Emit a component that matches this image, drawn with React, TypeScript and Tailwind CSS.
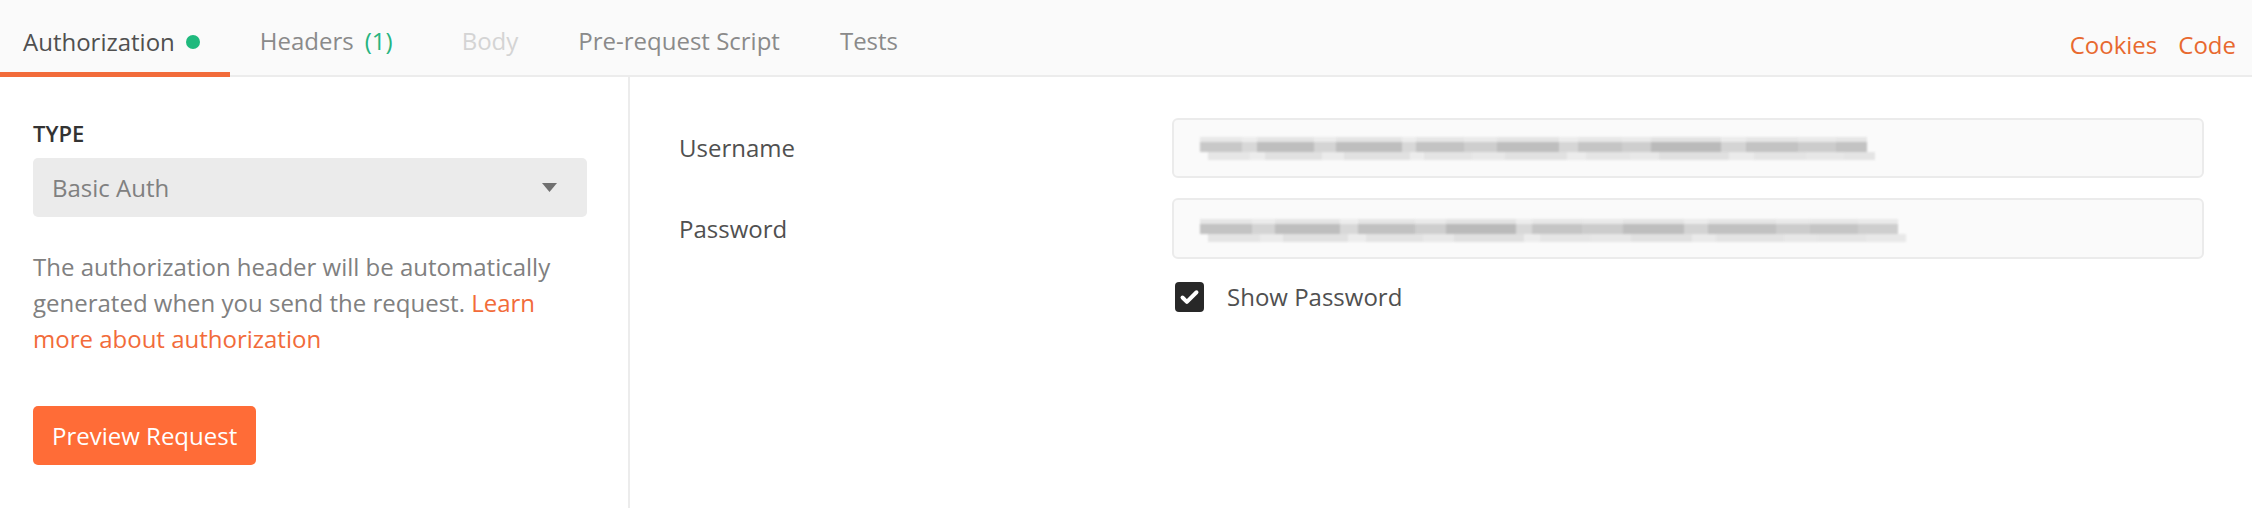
import { Check } from 'lucide-react'

const userBlur = [
  [38, 0.45], [14, 0.3], [52, 0.55], [20, 0.35], [60, 0.55], [12, 0.3], [44, 0.5], [30, 0.4],
  [56, 0.55], [18, 0.32], [40, 0.48], [26, 0.4], [64, 0.58], [22, 0.35], [48, 0.5], [34, 0.42], [28, 0.5],
]
const passBlur = [
  [46, 0.5], [20, 0.35], [58, 0.55], [16, 0.3], [50, 0.52], [28, 0.4], [62, 0.58], [14, 0.3],
  [44, 0.48], [36, 0.42], [54, 0.55], [22, 0.36], [60, 0.52], [30, 0.42], [42, 0.48], [36, 0.4],
]

function Blurred({ parts, scale }: { parts: number[][]; scale: number }) {
  return (
    <div className="flex flex-col blur-[1px]">
      <div className="flex h-[5px]">
        {parts.map(([w, o], i) => (
          <div key={i} style={{ width: w * scale, background: `rgba(170,170,170,${o * 0.5})` }} />
        ))}
      </div>
      <div className="flex h-[10px]">
        {parts.map(([w, o], i) => (
          <div key={i} style={{ width: w * scale, background: `rgba(140,140,140,${o})` }} />
        ))}
      </div>
      <div className="flex h-[8px] pl-[8px]">
        {parts.map(([w, o], i) => (
          <div key={i} style={{ width: w * scale, background: `rgba(170,170,170,${o * 0.55})` }} />
        ))}
      </div>
    </div>
  )
}

export default function App() {
  return (
    <div className="h-[508px] w-full flex flex-col bg-white font-['Open_Sans',sans-serif] text-[24px] text-[#505050]">
      {/* Tabs */}
      <div className="h-[77px] shrink-0 flex items-stretch bg-[#fafafa] border-b-2 border-[#ececec]">
        <div className="flex items-stretch">
          <div className="flex items-center pl-[23px] pr-[30px] pt-[12px] border-b-[5px] border-[#f26b3a] -mb-[2px]">
            <span className="leading-[32px] text-[#505050]">Authorization</span>
            <span className="ml-[11px] w-[14px] h-[14px] rounded-full bg-[#1fb97d]" />
          </div>
          <div className="flex items-center pl-[30px] pr-[39px] pt-[12px] border-b-[5px] border-transparent">
            <span className="leading-[32px] text-[#8a8a8a]">Headers</span>
            <span className="ml-[11px] leading-[32px] text-[#26b47f]">(1)</span>
          </div>
          <div className="flex items-center px-[30px] pt-[12px] border-b-[5px] border-transparent">
            <span className="leading-[32px] text-[#d4d4d4]">Body</span>
          </div>
          <div className="flex items-center px-[30px] pt-[12px] border-b-[5px] border-transparent">
            <span className="leading-[32px] text-[#8a8a8a]">Pre-request Script</span>
          </div>
          <div className="flex items-center px-[30px] pt-[12px] border-b-[5px] border-transparent">
            <span className="leading-[32px] text-[#8a8a8a]">Tests</span>
          </div>
        </div>
        <div className="ml-auto flex items-center gap-[21px] pr-[16px] pt-[14px] text-[#e8692f]">
          <span className="leading-[32px]">Cookies</span>
          <span className="leading-[32px]">Code</span>
        </div>
      </div>

      {/* Body */}
      <div className="flex-1 flex">
        <div className="w-[630px] shrink-0 border-r-2 border-[#ececec] px-[33px] pt-[41px]">
          <div className="text-[22px] leading-[30px] font-semibold text-[#333333]">TYPE</div>
          <div className="mt-[10px] h-[59px] w-[554px] rounded-[5px] bg-[#ebebeb] flex items-center justify-between pl-[19px] pr-[30px]">
            <span className="text-[#808080]">Basic Auth</span>
            <svg width="15" height="9" viewBox="0 0 15 9">
              <path d="M0 0 L15 0 L7.5 9 Z" fill="#707070" />
            </svg>
          </div>
          <p className="mt-[32px] w-[554px] leading-[36px] text-[#808080]">
            The authorization header will be automatically generated when you send the request.{' '}
            <span className="text-[#f26b3a]">Learn more about authorization</span>
          </p>
          <button className="mt-[49px] h-[59px] px-[19px] rounded-[5px] bg-[#ff6c37] text-white leading-[32px]">
            Preview Request
          </button>
        </div>

        <div className="flex-1 pt-[41px] pl-[49px] pr-[48px]">
          <div className="grid grid-cols-[493px_1fr] gap-y-[20px] items-center">
            <span className="text-[#505050]">Username</span>
            <div className="h-[60px] rounded-[6px] border-2 border-[#ebebeb] bg-[#fafafa] flex items-center pl-[26px]">
              <Blurred parts={userBlur} scale={1.1} />
            </div>
            <span className="text-[#505050]">Password</span>
            <div className="h-[61px] rounded-[6px] border-2 border-[#ebebeb] bg-[#fafafa] flex items-center pl-[26px] pt-[4px]">
              <Blurred parts={passBlur} scale={1.13} />
            </div>
          </div>
          <div className="mt-[22px] ml-[493px] flex items-center gap-[23px]">
            <span className="ml-[3px] w-[29px] h-[30px] rounded-[4px] bg-[#282828] flex items-center justify-center">
              <Check className="w-[21px] h-[21px] text-white" strokeWidth={4.5} />
            </span>
            <span className="leading-[32px] text-[#505050]">Show Password</span>
          </div>
        </div>
      </div>
    </div>
  )
}
